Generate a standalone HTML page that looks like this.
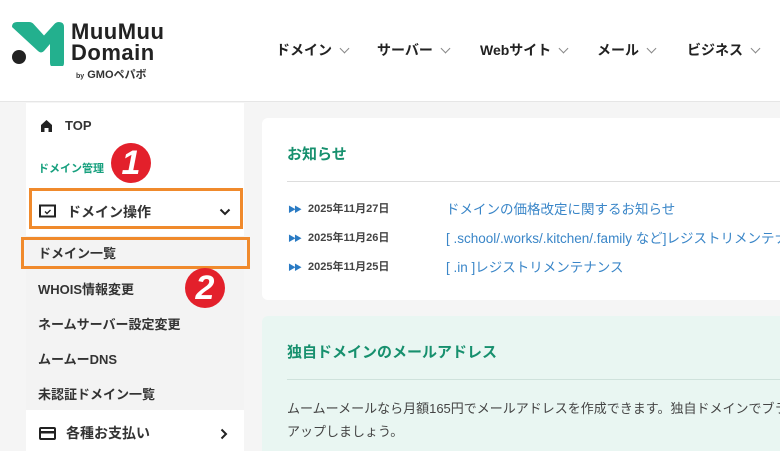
<!DOCTYPE html>
<html><head><meta charset="utf-8"><style>
*{margin:0;padding:0;box-sizing:border-box}
html,body{width:780px;height:451px;overflow:hidden}
body{background:#f5f5f5;font-family:"Liberation Sans","Noto Sans CJK JP",sans-serif;color:#333;position:relative}
.hdr{position:absolute;left:0;top:0;width:780px;height:102px;background:#fff;border-bottom:1px solid #e6e6e6}
.nav{position:absolute;top:40px;font-size:14px;font-weight:bold;color:#222}
.nav span{position:absolute;white-space:nowrap}
.chev{display:inline-block;width:7px;height:7px;border-right:1.5px solid #888;border-bottom:1.5px solid #888;transform:rotate(45deg);margin-left:9px;position:relative;top:-3px}
.side{position:absolute;left:26px;top:103px;width:218px;height:348px;background:#fff}
.sub{position:absolute;left:26px;top:236px;width:218px;height:174px;background:#f3f3f3}
.t{position:absolute;white-space:nowrap;font-weight:bold;font-size:13px}
.box{position:absolute;border:3px solid #f08a2c}
.num{position:absolute;width:40px;height:40px;border-radius:50%;background:#e3202b;color:#fff;font:italic bold 34px/40px "Liberation Sans",sans-serif;text-align:center}
.card{position:absolute;left:262px;top:118px;width:518px;height:182px;background:#fff;border-radius:6px 0 0 6px;overflow:hidden}
.card2{position:absolute;left:262px;top:316px;width:518px;height:135px;background:#e9f6f2;border-radius:6px 0 0 0;overflow:hidden}
.line{position:absolute;left:25px;right:0;height:1px;background:#ddd}
.d{position:absolute;left:26px;font-size:11px;font-weight:bold;color:#444;white-space:nowrap}
.d b{color:#2a7bc4;font-size:8px;margin-right:8px;letter-spacing:-2px}
.l{position:absolute;left:184px;font-size:13.5px;color:#3a86c8;white-space:nowrap}
</style></head><body>
<div class="hdr">
<svg style="position:absolute;left:10px;top:22px" width="54" height="44" viewBox="0 0 54 44">
<path d="M2 5 q0-5 5-5 h12 q3 0 5 2.5 l10 11 l10-11 q2-2.5 5-2.5 h0 q5 0 5 5 v36 q0 4-4 4 h-6 q-4 0-4-4 v-19 l-6 7 q-3 3-6 0 z" fill="#23b08e"/>
<circle cx="9" cy="35" r="7" fill="#222"/>
</svg>
<div style="position:absolute;left:71px;top:21px;font:bold 22px/21px 'Liberation Sans',sans-serif;color:#222;letter-spacing:0.5px">MuuMuu<br>Domain</div>
<div style="position:absolute;left:76px;top:66px;font:bold 11px 'Liberation Sans','Noto Sans CJK JP',sans-serif;color:#333;white-space:nowrap"><span style="font-size:7px">by</span> GMOペパボ</div>
<div class="nav"><span style="left:276px">ドメイン<i class="chev"></i></span><span style="left:377px">サーバー<i class="chev"></i></span><span style="left:480px">Webサイト<i class="chev"></i></span><span style="left:597px">メール<i class="chev"></i></span><span style="left:687px">ビジネス<i class="chev"></i></span></div>
</div>
<div class="side"></div>
<div class="sub"></div>
<svg style="position:absolute;left:40px;top:119px" width="13" height="13" viewBox="0 0 13 13"><path d="M1 6 L6.5 1 L12 6 V13 H8.5 V9 H4.5 V13 H1z" fill="#222"/></svg>
<div class="t" style="left:65px;top:118px">TOP</div>
<div class="t" style="left:38px;top:160px;font-size:11px;color:#17a07e">ドメイン管理</div>
<svg style="position:absolute;left:39px;top:204px" width="17" height="14" viewBox="0 0 17 14"><rect x="1" y="1.5" width="15" height="11" fill="none" stroke="#222" stroke-width="2"/><path d="M6 7.5 l2 2 l3.5-3.5" fill="none" stroke="#222" stroke-width="1.4"/></svg>
<div class="t" style="left:67px;top:202px;font-size:14px">ドメイン操作</div>
<svg style="position:absolute;left:219px;top:208px" width="12" height="8" viewBox="0 0 12 8"><path d="M1.5 1.5 L6 6 L10.5 1.5" fill="none" stroke="#222" stroke-width="2"/></svg>
<div class="box" style="left:29px;top:188px;width:214px;height:41px"></div>
<div class="t" style="left:38px;top:243px">ドメイン一覧</div>
<div class="box" style="left:21px;top:237px;width:229px;height:32px"></div>
<div class="t" style="left:38px;top:279px">WHOIS情報変更</div>
<div class="t" style="left:38px;top:314px">ネームサーバー設定変更</div>
<div class="t" style="left:38px;top:349px">ムームーDNS</div>
<div class="t" style="left:38px;top:384px">未認証ドメイン一覧</div>
<svg style="position:absolute;left:39px;top:427px" width="17" height="13" viewBox="0 0 17 13"><rect x="1" y="1" width="15" height="11" rx="1" fill="none" stroke="#222" stroke-width="2"/><rect x="1" y="4" width="15" height="2.5" fill="#222"/></svg>
<div class="t" style="left:66px;top:423px;font-size:14px">各種お支払い</div>
<svg style="position:absolute;left:220px;top:428px" width="8" height="12" viewBox="0 0 8 12"><path d="M1.5 1.5 L6 6 L1.5 10.5" fill="none" stroke="#222" stroke-width="2"/></svg>
<div class="num" style="left:111px;top:143px">1</div>
<div class="num" style="left:185px;top:268px">2</div>
<div class="card">
<div style="position:absolute;left:25px;top:25px;font-size:15px;font-weight:bold;color:#17906e">お知らせ</div>
<div class="line" style="top:63px"></div>
<div class="d" style="top:82px"><b>▶▶</b>2025年11月27日</div><div class="l" style="top:80px">ドメインの価格改定に関するお知らせ</div>
<div class="d" style="top:111px"><b>▶▶</b>2025年11月26日</div><div class="l" style="top:109px">[ .school/.works/.kitchen/.family など]レジストリメンテナンス</div>
<div class="d" style="top:140px"><b>▶▶</b>2025年11月25日</div><div class="l" style="top:138px">[ .in ]レジストリメンテナンス</div>
</div>
<div class="card2">
<div style="position:absolute;left:25px;top:25px;font-size:15px;font-weight:bold;color:#17906e">独自ドメインのメールアドレス</div>
<div class="line" style="top:63px;background:#cfe2dc"></div>
<div style="position:absolute;left:25px;top:81px;font-size:13px;color:#444;line-height:23px;white-space:nowrap">ムームーメールなら月額165円でメールアドレスを作成できます。独自ドメインでブランド力を<br>アップしましょう。</div>
</div>
</body></html>
